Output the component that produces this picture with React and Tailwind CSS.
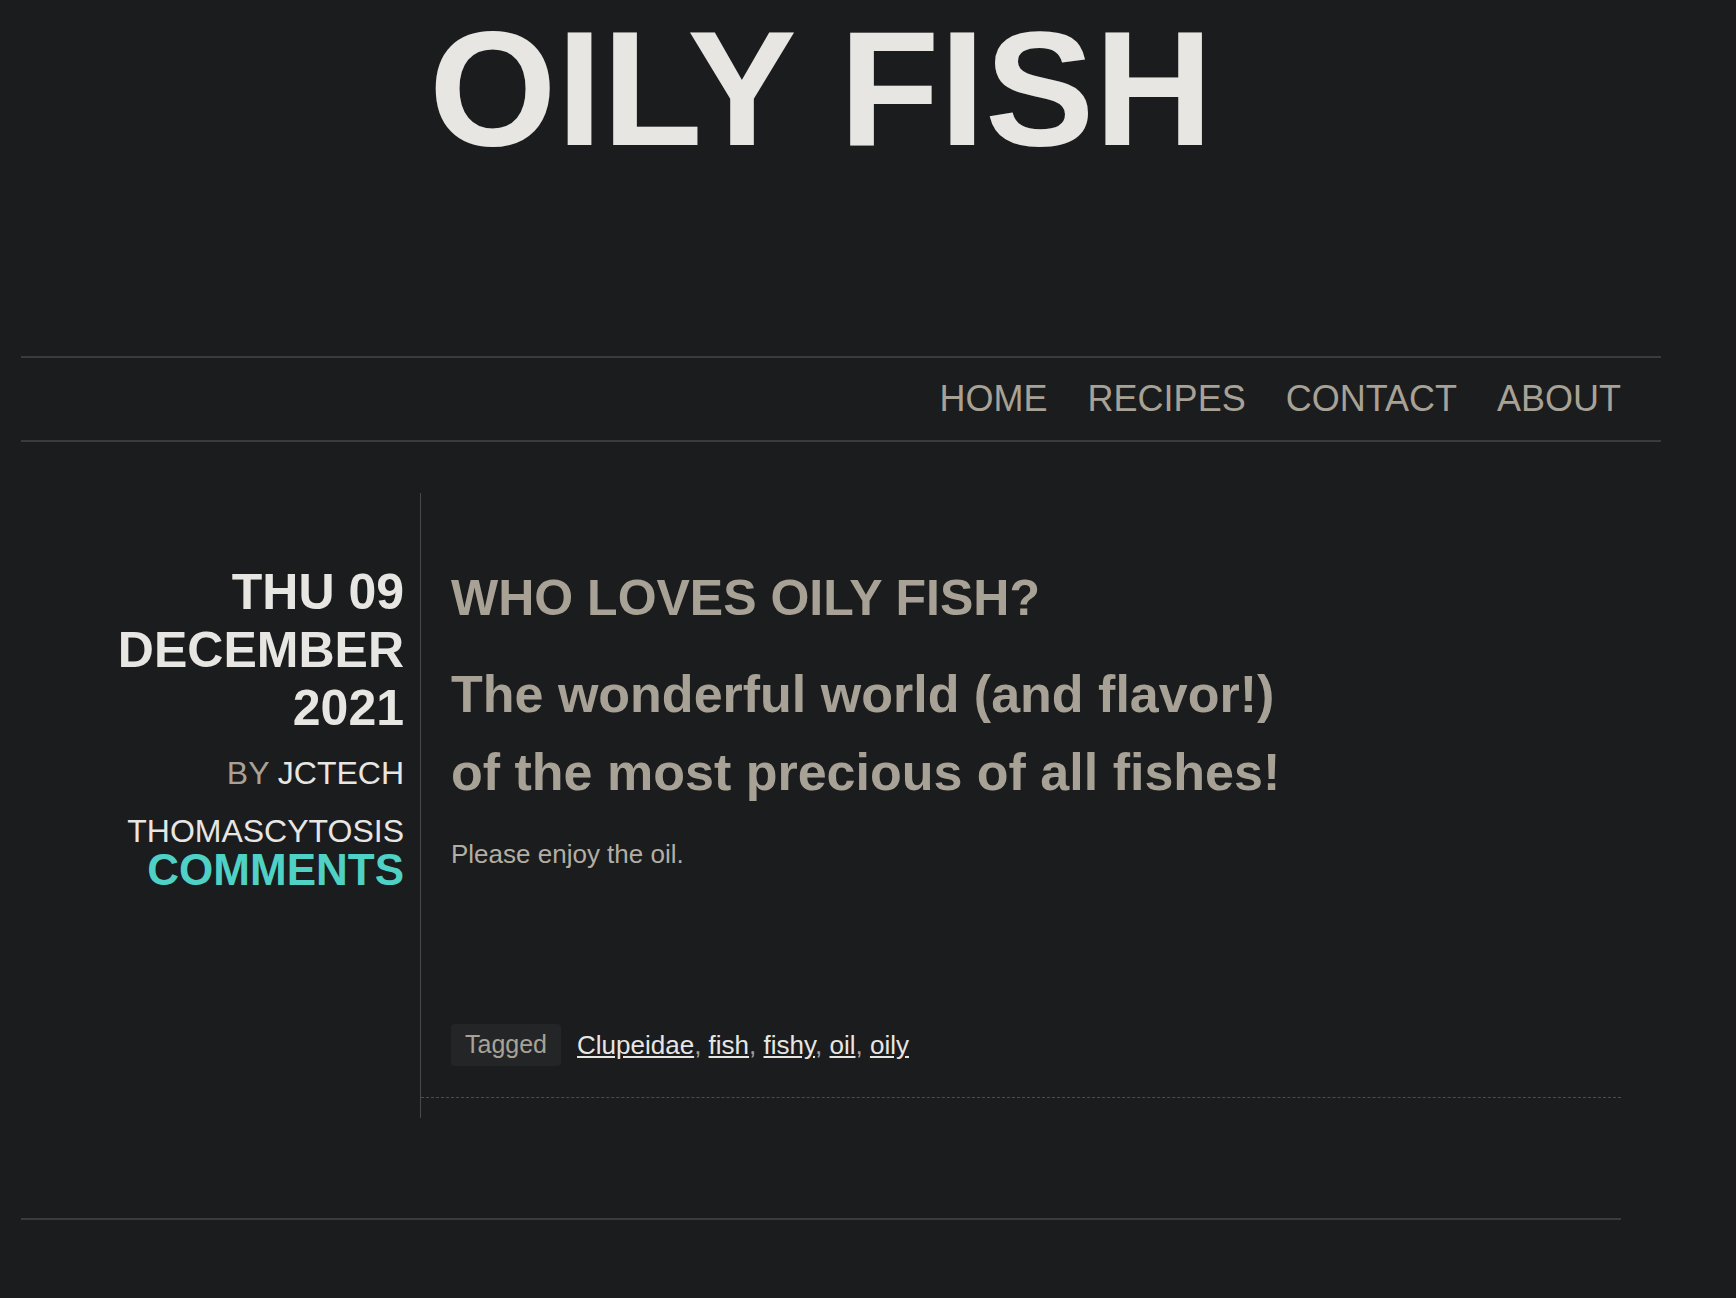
import React from 'react';

const navItems = ['HOME', 'RECIPES', 'CONTACT', 'ABOUT'];
const tags = ['Clupeidae', 'fish', 'fishy', 'oil', 'oily'];

const App = () => {
  return (
    <div className="min-h-screen bg-[#1b1c1e] pl-[21px] font-['Liberation_Sans',Arial,sans-serif]">
      {/* Site title + nav */}
      <header>
        <div className="w-[1600px] h-[356px] text-center">
          <h1 className="pt-[7px] text-[164px] leading-none font-bold text-[#e8e6e3]">OILY FISH</h1>
        </div>
        <nav className="w-[1640px] h-[86px] border-y-2 border-[#3a3b3d] flex items-center justify-end pr-[40px]">
          <ul className="flex gap-[40px] text-[36px] leading-none text-[#a8a296]">
            {navItems.map((item) => (
              <li key={item}>{item}</li>
            ))}
          </ul>
        </nav>
      </header>

      <main className="mt-[51px] flex w-[1600px]">
        {/* Post meta */}
        <aside className="w-[399px] shrink-0 pr-[16px] pt-[70px] text-right">
          <div className="text-[50px] leading-[58px] font-bold text-[#e8e6e3]">
            THU 09
            <br />
            DECEMBER
            <br />
            2021
          </div>
          <div className="mt-[16px] text-[32px] leading-[40px] text-[#a8a296]">
            BY <span className="text-[#e8e6e3]">JCTECH</span>
          </div>
          <div className="mt-[20px] text-[32px] leading-[36px] text-[#e8e6e3]">THOMASCYTOSIS</div>
          <div className="text-[44px] leading-[42px] font-bold text-[#4fd1c5]">COMMENTS</div>
        </aside>

        {/* Post body */}
        <div className="flex-1 border-l border-[#47494b] pb-[20px]">
          <article className="pl-[30px] pt-[76px] pb-[31px] border-b border-dashed border-[#4a4c4e]">
            <h2 className="text-[50px] leading-[58px] font-bold text-[#a8a296]">WHO LOVES OILY FISH?</h2>
            <h3 className="mt-[28px] text-[52px] leading-[78px] font-bold text-[#a8a296]">
              The wonderful world (and flavor!)
              <br />
              of the most precious of all fishes!
            </h3>
            <p className="mt-[24px] text-[26px] leading-[39px] text-[#b3aea4]">Please enjoy the oil.</p>

            <div className="mt-[150px] flex items-center gap-[16px] text-[26px]">
              <span className="h-[42px] px-[14px] flex items-center rounded-[4px] bg-[#242527] text-[25px] text-[#a8a296]">Tagged</span>
              <span className="text-[#a8a296]">
                {tags.map((tag, i) => (
                  <React.Fragment key={tag}>
                    <a href="#" className="underline text-[#e8e6e3]">{tag}</a>
                    {i < tags.length - 1 && ', '}
                  </React.Fragment>
                ))}
              </span>
            </div>
          </article>
        </div>
      </main>

      <footer className="mt-[100px] w-[1600px] border-t-2 border-[#3a3b3d]" />
    </div>
  );
};

export default App;
